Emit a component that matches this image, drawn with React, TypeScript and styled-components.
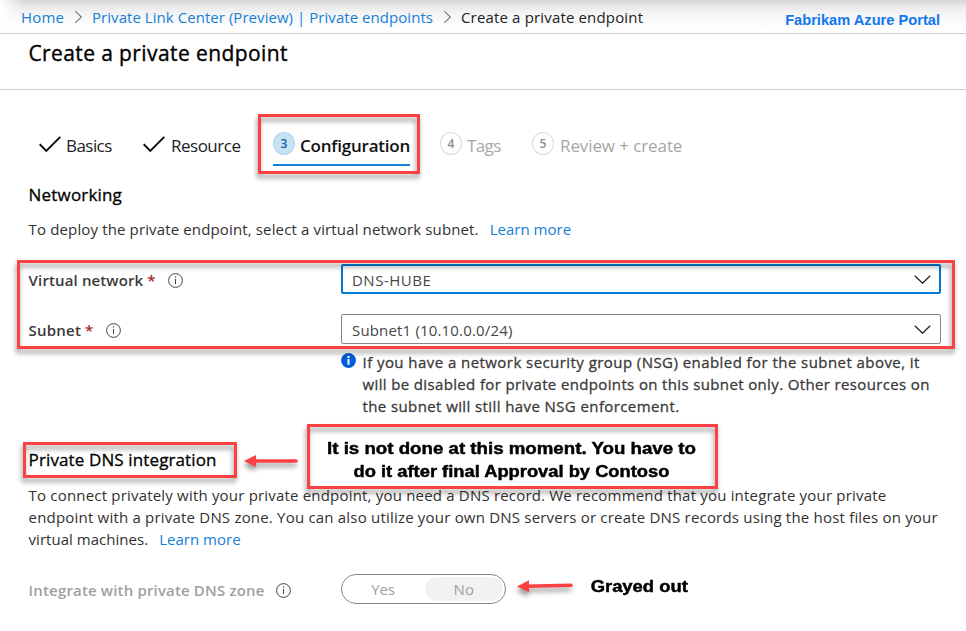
import React from "react";
import styled, { createGlobalStyle, css } from "styled-components";

const GlobalStyle = createGlobalStyle`
  body { margin: 0; background: #fff; }
  * { box-sizing: border-box; }
`;

const Page = styled.div`
  width: 966px;
  height: 631px;
  overflow: hidden;
  background: #fff;
  color: #323130;
  font: 400 15px/22px "Open Sans", sans-serif;
  white-space: nowrap;
`;

/* letter spacing in px, so that runs keep their intended measure */
const Run = styled.span<{ $ls?: number }>`
  letter-spacing: ${(p) => p.$ls ?? 0}px;
`;

const LinkRun = styled(Run)`
  color: #1580d8;
`;

const LearnMore = styled(LinkRun)`
  margin-left: 11px;
`;

const TopBar = styled.header`
  display: flex;
  align-items: flex-start;
  height: 34px;
  padding: 6px 26px 0 21px;
  border-bottom: 1px solid #cfcfcf;
  background:
    linear-gradient(90deg, #fff 0, rgba(255, 255, 255, 0) 22px),
    linear-gradient(180deg, #d6d6d6 0, #e6e6e6 5px, #f4f4f4 13px, #fcfcfc 24px, #fff 32px);
`;

const CrumbArrow = styled.svg<{ $right: number }>`
  flex: none;
  width: 9px;
  height: 14px;
  margin: 4px ${(p) => p.$right}px 0 10px;
  fill: none;
  stroke: #777;
  stroke-width: 1.1;
`;

const CrumbLink = styled(LinkRun)<{ $w: number }>`
  width: ${(p) => p.$w}px;
`;

const CurrentCrumb = styled(Run)`
  color: #222;
`;

const PortalName = styled.div`
  margin: 3px 0 0 auto;
  font: 700 14.65px/22px "Liberation Sans", Arial, sans-serif;
  color: #1277ee;
`;

const TitleBar = styled.div`
  height: 56px;
  padding: 5px 0 0 28.4px;
  border-bottom: 1px solid #cfcfcf;
`;

const Title = styled.h1`
  margin: 0;
  font-size: 21px;
  font-weight: 400;
  line-height: 28px;
  letter-spacing: 0.4px;
  color: #000;
  -webkit-text-stroke: 0.35px #000;
`;

const Steps = styled.nav`
  display: flex;
  height: 77px;
  padding: 42px 0 0 39px;
`;

const Step = styled.div<{ $gap: number; $active?: boolean; $off?: boolean }>`
  position: relative;
  display: flex;
  align-items: flex-start;
  height: 34px;
  margin-right: ${(p) => p.$gap}px;
  font-size: 17px;
  line-height: 24px;
  color: ${(p) => (p.$off ? "#a6a6a6" : "#222")};
  ${(p) =>
    p.$active &&
    css`
      color: #111;
      font-weight: 600;
      border-bottom: 2px solid #1580d8;
    `}
`;

const StepLabel = styled(Run)<{ $w: number }>`
  width: ${(p) => p.$w}px;
  padding-top: 2px;
`;

const StepNumber = styled.span<{ $active?: boolean; $gap?: number }>`
  flex: none;
  display: flex;
  justify-content: center;
  width: 22px;
  height: 23px;
  margin-right: ${(p) => p.$gap ?? 5}px;
  border: 1px solid ${(p) => (p.$active ? "#b5d5f7" : "#dcdcdc")};
  border-radius: 50%;
  background: ${(p) => (p.$active ? "#c7e2f1" : "#fff")};
  font-size: 12px;
  font-weight: 600;
  line-height: 22px;
  color: ${(p) => (p.$active ? "#0b5fa5" : "#8c8c8c")};
`;

const Check = styled.svg<{ $gap: number }>`
  flex: none;
  width: 22px;
  height: 17px;
  margin: 4px ${(p) => p.$gap}px 0 0;
  fill: none;
  stroke: #111;
  stroke-width: 2;
`;

const Heading = styled.h2<{ $ls: number }>`
  margin: 0;
  font-size: 17px;
  font-weight: 400;
  line-height: 24px;
  letter-spacing: ${(p) => p.$ls}px;
  color: #000;
  -webkit-text-stroke: 0.3px #000;
`;

const Section = styled.section<{ $top: number; $h: number }>`
  position: relative;
  height: ${(p) => p.$h}px;
  padding: ${(p) => p.$top}px 0 0 28.6px;
`;

const Copy = styled.p<{ $top: number }>`
  margin: ${(p) => p.$top}px 0 0;
`;

const CopyLine = styled(Run)`
  display: block;
`;

const Fields = styled.div`
  position: relative;
  display: grid;
  grid-template-columns: 312.4px 600px;
  grid-auto-rows: 30px;
  row-gap: 20px;
  padding-left: 28.6px;
`;

const Label = styled.label<{ $off?: boolean }>`
  display: flex;
  align-items: center;
  padding-top: 1px;
  font-weight: 600;
  color: ${(p) => (p.$off ? "#a19f9d" : "#3b3a39")};
`;

const Required = styled.span`
  margin-left: 4px;
  color: #a4262c;
`;

const InfoOutline = styled.svg<{ $gap: number }>`
  width: 15px;
  height: 15px;
  margin: 1px 0 0 ${(p) => p.$gap}px;
`;

const Select = styled.div<{ $focus?: boolean }>`
  display: flex;
  align-items: center;
  justify-content: space-between;
  padding: ${(p) => (p.$focus ? "1px 8px 0 9px" : "1px 9px 0 10px")};
  border: ${(p) => (p.$focus ? "2px solid #0078d4" : "1px solid #8a8886")};
  border-radius: 2px;
  color: #484644;
`;

const Chevron = styled.svg`
  width: 17px;
  height: 9px;
  fill: none;
  stroke: #222;
  stroke-width: 1.3;
`;

const Notice = styled.div`
  display: flex;
  height: 104px;
  padding: 7px 0 0 341px;
  color: #3b3a39;
  -webkit-text-stroke: 0.3px #3b3a39;
`;

const InfoSolid = styled.svg`
  flex: none;
  width: 15px;
  height: 15px;
  margin: 2px 6.5px 0 0;
`;

const ToggleRow = styled.div`
  position: relative;
  display: grid;
  grid-template-columns: 312.4px 165px;
  height: 30px;
  padding-left: 28.6px;
`;

const Toggle = styled.div`
  display: flex;
  justify-content: space-between;
  padding: 2px 2px 0 2px;
  border: 1px solid #8a8886;
  border-radius: 15px;
  color: #a19f9d;
`;

const Option = styled.span<{ $on?: boolean }>`
  width: 78px;
  height: 24px;
  padding-top: 1px;
  border-radius: 12px;
  background: ${(p) => (p.$on ? "#f3f2f1" : "transparent")};
  text-align: center;
`;

/* Red markup laid over the form */
const Highlight = styled.div<{ $x: number; $y: number; $w: number; $h: number }>`
  position: absolute;
  left: ${(p) => p.$x}px;
  top: ${(p) => p.$y}px;
  width: ${(p) => p.$w}px;
  height: ${(p) => p.$h}px;
  border: 3px solid #fb4144;
  filter: drop-shadow(-1px 4px 2.5px rgba(0, 0, 0, 0.42));
  pointer-events: none;
`;

const Callout = styled.div`
  position: absolute;
  left: 306px;
  top: -11px;
  width: 411px;
  text-align: center;
`;

const Bold = styled.span<{ $sx: number }>`
  display: block;
  font: 700 16px/23px "Liberation Sans", Arial, sans-serif;
  color: #000;
  -webkit-text-stroke: 0.45px #000;
  transform: scaleX(${(p) => p.$sx});
`;

const GrayedOut = styled.div`
  position: absolute;
  left: 596.5px;
  top: 1px;
`;

const Arrow = styled.svg<{ $x: number; $y: number }>`
  position: absolute;
  left: ${(p) => p.$x}px;
  top: ${(p) => p.$y}px;
  width: 58px;
  height: 14px;
  overflow: visible;
  filter: drop-shadow(-1px 4px 2.5px rgba(0, 0, 0, 0.42));
`;

const Info = ({ gap }: { gap: number }) => (
  <InfoOutline $gap={gap} viewBox="0 0 15 15">
    <circle cx="7.5" cy="7.5" r="6.9" fill="none" stroke="#444" strokeWidth="1" />
    <path d="M7.5 6v5.2" stroke="#444" strokeWidth="1" />
    <circle cx="7.5" cy="4" r="0.7" fill="#444" />
  </InfoOutline>
);

const CrumbSep = ({ right }: { right: number }) => (
  <CrumbArrow $right={right} viewBox="0 0 9 14">
    <path d="M1.2 1.2 7.4 7 1.2 12.8" />
  </CrumbArrow>
);

const Done = ({ gap }: { gap: number }) => (
  <Check $gap={gap} viewBox="0 0 22 17">
    <path d="M.7 8.3 7.3 14.9 21.3.9" />
  </Check>
);

const Down = () => (
  <Chevron viewBox="0 0 17 9">
    <path d="M.8.8 8.5 8.2 16.2.8" />
  </Chevron>
);

export default function App() {
  return (
    <Page>
      <GlobalStyle />
      <TopBar>
        <CrumbLink $w={43} $ls={0.2}>Home</CrumbLink>
        <CrumbSep right={9} />
        <CrumbLink $w={341} $ls={0.05}>Private Link Center (Preview) | Private endpoints</CrumbLink>
        <CrumbSep right={9} />
        <CurrentCrumb $ls={0.16}>Create a private endpoint</CurrentCrumb>
        <PortalName>Fabrikam Azure Portal</PortalName>
      </TopBar>

      <TitleBar>
        <Title>Create a private endpoint</Title>
      </TitleBar>

      <Steps>
        <Step $gap={31}>
          <Done gap={5} />
          <StepLabel $w={46} $ls={-0.55}>Basics</StepLabel>
        </Step>
        <Step $gap={31}>
          <Done gap={6} />
          <StepLabel $w={71} $ls={-0.5}>Resource</StepLabel>
        </Step>
        <Step $gap={30} $active>
          <StepNumber $active>3</StepNumber>
          <StepLabel $w={110} $ls={-0.22}>Configuration</StepLabel>
          <Highlight $x={-15} $y={-18} $w={162} $h={60} />
        </Step>
        <Step $gap={31} $off>
          <StepNumber>4</StepNumber>
          <StepLabel $w={34} $ls={-0.6}>Tags</StepLabel>
        </Step>
        <Step $gap={0} $off>
          <StepNumber $gap={6}>5</StepNumber>
          <StepLabel $w={123} $ls={-0.1}>Review + create</StepLabel>
        </Step>
      </Steps>

      <Section $top={16} $h={97}>
        <Heading $ls={0.18}>Networking</Heading>
        <Copy $top={11}>
          <Run $ls={0.14}>To deploy the private endpoint, select a virtual network subnet.</Run>
          <LearnMore $ls={0.02}>Learn more</LearnMore>
        </Copy>
      </Section>

      <Fields>
        <Label>
          <Run $ls={0.13}>Virtual network</Run>
          <Required>*</Required>
          <Info gap={12} />
        </Label>
        <Select $focus>
          <Run $ls={0.5}>DNS-HUBE</Run>
          <Down />
        </Select>
        <Label>
          <Run $ls={0.2}>Subnet</Run>
          <Required>*</Required>
          <Info gap={13} />
        </Label>
        <Select>
          <Run $ls={0.17}>Subnet1 (10.10.0.0/24)</Run>
          <Down />
        </Select>
        <Highlight $x={17} $y={-4} $w={938} $h={89} />
      </Fields>

      <Notice>
        <InfoSolid viewBox="0 0 15 15">
          <circle cx="7.5" cy="7.5" r="7.4" fill="#015cda" />
          <circle cx="7.5" cy="3.9" r="1.2" fill="#fff" />
          <path d="M7.5 6v5.7" stroke="#fff" strokeWidth="2" />
        </InfoSolid>
        <div>
          <CopyLine $ls={0.44}>If you have a network security group (NSG) enabled for the subnet above, it</CopyLine>
          <CopyLine $ls={0.36}>will be disabled for private endpoints on this subnet only. Other resources on</CopyLine>
          <CopyLine $ls={0.4}>the subnet will still have NSG enforcement.</CopyLine>
        </div>
      </Notice>

      <Section $top={0} $h={126}>
        <Heading $ls={0.12}>Private DNS integration</Heading>
        <Copy $top={12}>
          <CopyLine $ls={0.19}>
            To connect privately with your private endpoint, you need a DNS record. We recommend that you integrate your private
          </CopyLine>
          <CopyLine $ls={0.2}>
            endpoint with a private DNS zone. You can also utilize your own DNS servers or create DNS records using the host files on your
          </CopyLine>
          <Run $ls={0.03}>virtual machines.</Run>
          <LearnMore $ls={0.02}>Learn more</LearnMore>
        </Copy>
        <Highlight $x={23} $y={-6} $w={214} $h={36} />
        <Arrow $x={244} $y={6} viewBox="0 0 58 14">
          <path d="M10 7H52" stroke="#fb4144" strokeWidth="3.6" strokeLinecap="round" />
          <path d="M0 7 12 1V13z" fill="#fb4144" />
        </Arrow>
        <Highlight $x={307} $y={-24} $w={411} $h={65} />
        <Callout>
          <Bold $sx={1.168}>It is not done at this moment. You have to</Bold>
          <Bold $sx={1.145}>do it after final Approval by Contoso</Bold>
        </Callout>
      </Section>

      <ToggleRow>
        <Label $off>
          <Run $ls={0.16}>Integrate with private DNS zone</Run>
          <Info gap={11} />
        </Label>
        <Toggle>
          <Option>
            <Run $ls={-0.2}>Yes</Run>
          </Option>
          <Option $on>
            <Run $ls={0.3}>No</Run>
          </Option>
        </Toggle>
        <Arrow $x={517} $y={5} viewBox="0 0 58 14">
          <path d="M10 7.3 54 6.2" stroke="#fb4144" strokeWidth="3.6" strokeLinecap="round" />
          <path d="M0 7.5 12 1.3V13.3z" fill="#fb4144" />
        </Arrow>
        <GrayedOut>
          <Bold $sx={1.15}>Grayed out</Bold>
        </GrayedOut>
      </ToggleRow>
    </Page>
  );
}
